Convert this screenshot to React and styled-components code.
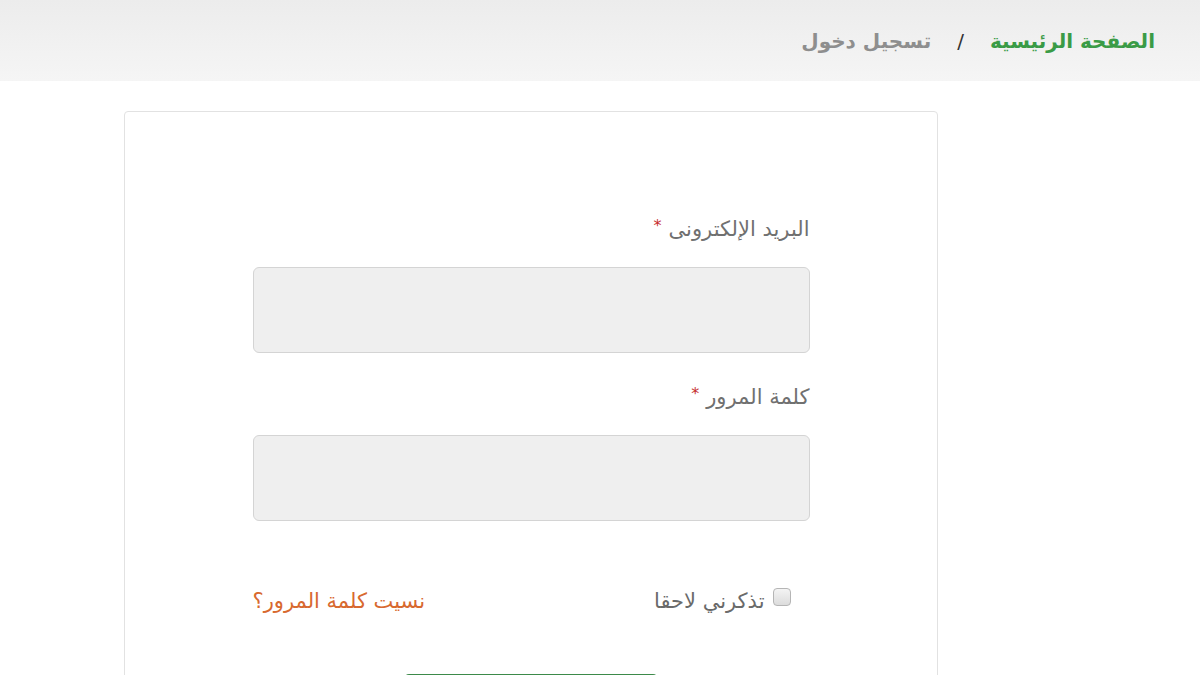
import React from "react";
import styled, { createGlobalStyle } from "styled-components";

const GlobalStyle = createGlobalStyle`
  body {
    margin: 0;
    background: #fff;
    font-family: "DejaVu Sans", "Noto Sans", sans-serif;
  }
`;

const Page = styled.div`
  direction: rtl;
  height: 675px;
  overflow: hidden;
`;

const TopBar = styled.div`
  height: 81px;
  background: linear-gradient(to bottom, #ececec, #f5f5f5);
  display: flex;
  align-items: center;
  padding: 0 45px;
`;

const Crumbs = styled.div`
  display: flex;
  align-items: center;
  gap: 26px;
  font-size: 20px;
  font-weight: bold;
`;

const Crumb = styled.span`
  color: ${(p) => (p.$active ? "#3a9b46" : "#8e8e8e")};
`;

const Sep = styled.span`
  color: #333;
  font-weight: normal;
`;

const Card = styled.div`
  margin: 30px 262px 0 124px;
  border: 1px solid #e2e2e2;
  border-radius: 4px;
  height: 620px;
  padding-top: 100px;
  box-sizing: border-box;
`;

const Form = styled.form`
  width: 557px;
  margin: 0 auto;
`;

const Label = styled.label`
  display: block;
  font-size: 21px;
  line-height: 28px;
  color: #707070;
  margin-bottom: 24px;
`;

const Star = styled.span`
  color: #c62f2f;
  font-size: 16px;
  margin-right: 7px;
  vertical-align: 5px;
`;

const Input = styled.input`
  display: block;
  width: 100%;
  height: 86px;
  box-sizing: border-box;
  background: #efefef;
  border: 1px solid #d4d4d4;
  border-radius: 6px;
  margin-bottom: ${(p) => p.$gap || "27px"};
  outline: none;
`;

const OptionsRow = styled.div`
  display: flex;
  justify-content: space-between;
  align-items: center;
  height: 28px;
  padding-right: 19px;
  margin-bottom: 59px;
`;

const Remember = styled.label`
  display: flex;
  align-items: center;
  gap: 8px;
  font-size: 21px;
  color: #6a6a6a;

  input {
    appearance: none;
    margin: 0;
    width: 18px;
    height: 18px;
    border: 1px solid #b5b5b5;
    border-radius: 4px;
    background: linear-gradient(to bottom, #f4f4f4, #dcdcdc);
    position: relative;
    top: -4px;
  }
`;

const Forgot = styled.a`
  font-size: 21px;
  color: #d8692f;
  text-decoration: none;
`;

const Submit = styled.button`
  display: block;
  margin: 0 auto;
  width: 252px;
  height: 48px;
  background: #4a9e57;
  border: none;
  border-top: 2px solid #3d8a4a;
  border-radius: 4px;
`;

export default function App() {
  return (
    <>
      <GlobalStyle />
      <Page>
        <TopBar>
          <Crumbs>
            <Crumb $active>الصفحة الرئيسية</Crumb>
            <Sep>/</Sep>
            <Crumb>تسجيل دخول</Crumb>
          </Crumbs>
        </TopBar>
        <Card>
          <Form>
            <Label>
              البريد الإلكترونى<Star>*</Star>
            </Label>
            <Input type="email" />
            <Label>
              كلمة المرور<Star>*</Star>
            </Label>
            <Input type="password" $gap="66px" />
            <OptionsRow>
              <Remember>
                <input type="checkbox" />
                تذكرني لاحقا
              </Remember>
              <Forgot href="#">نسيت كلمة المرور؟</Forgot>
            </OptionsRow>
            <Submit type="submit" />
          </Form>
        </Card>
      </Page>
    </>
  );
}
